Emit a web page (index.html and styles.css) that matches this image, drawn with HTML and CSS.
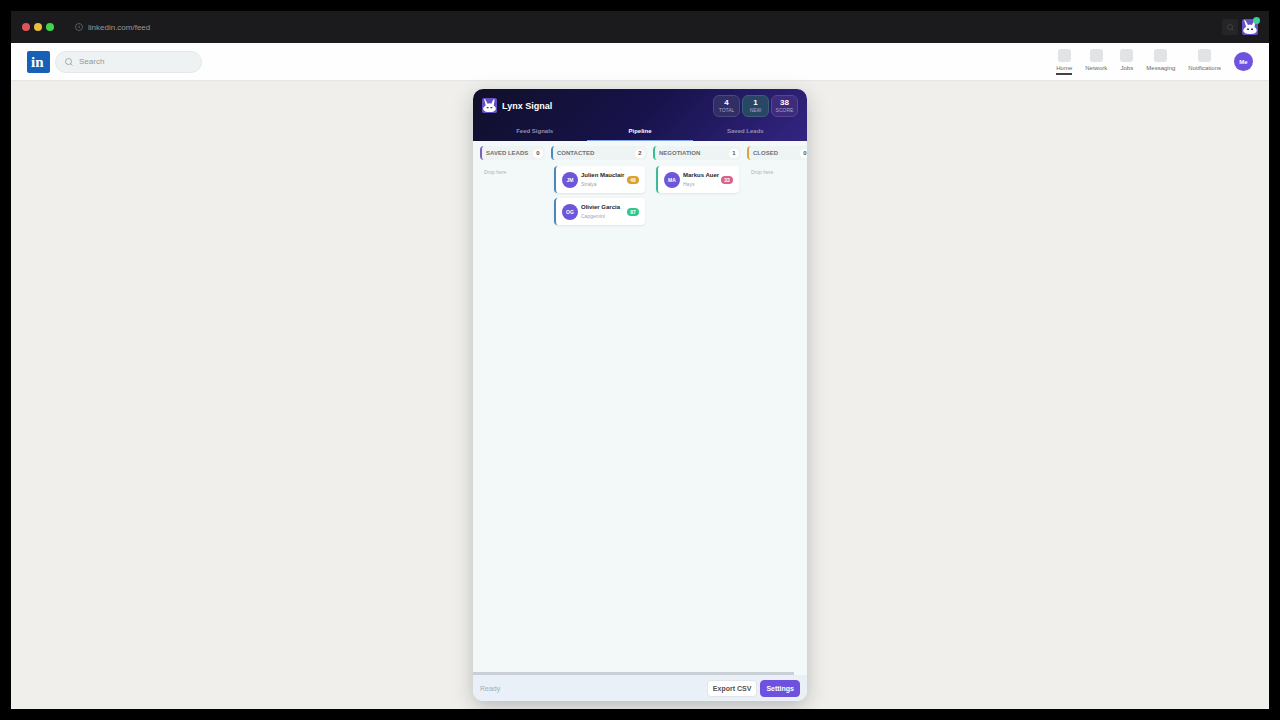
FILE: index.html
```html
<!DOCTYPE html>
<html lang="en">
<head>
    <meta charset="utf-8">
    <meta name="viewport" content="width=device-width, initial-scale=1.0">
    <title>Lynx Signal</title>
    <link rel="stylesheet" href="styles.css">
</head>

<body>
    <svg class="sprite" aria-hidden="true">
        <symbol id="lynx" viewBox="0 0 32 32">
            <rect width="32" height="32" rx="4" fill="#6451c4" />
            <path d="M4 2 L7 3 L12 12 Q16 10 20 12 L24 3 L27 3 L25 16 Q31 20 29 25 Q27 30 16 30 Q5 30 3 25 Q1 20 8 16 L6 8Z" fill="#fff" />
            <path d="M10 19h4v3h-4zM18 19h4v3h-4z" fill="#3b3470" />
        </symbol>
        <symbol id="search" viewBox="0 0 16 16">
            <circle cx="7" cy="7" r="6" fill="none" stroke="currentColor" stroke-width="1.6" />
            <path d="M11 11l4 4" stroke="currentColor" stroke-width="1.6" />
        </symbol>
    </svg>

    <div class="browser">
        <header class="topbar">
            <div class="lights"><span class="red"></span><span class="yellow"></span><span class="green"></span></div>
            <div class="address">
                <svg viewBox="0 0 16 16"><circle cx="8" cy="8" r="7" fill="none" stroke="currentColor" stroke-width="1.4" /><path d="M8 5v4h2" fill="none" stroke="currentColor" stroke-width="1.4" /></svg>
                <span>linkedin.com/feed</span>
            </div>
            <button class="find" aria-label="Find"><svg><use href="#search" /></svg></button>
            <button class="extension" aria-label="Lynx Signal"><svg><use href="#lynx" /></svg><span class="dot"></span></button>
        </header>

        <div class="site">
            <a class="logo" href="#" aria-label="LinkedIn">in</a>
            <label class="search"><svg><use href="#search" /></svg><input type="text" placeholder="Search" aria-label="Search"></label>
            <nav>
                <a href="#" class="active"><i></i>Home</a>
                <a href="#"><i></i>Network</a>
                <a href="#"><i></i>Jobs</a>
                <a href="#"><i></i>Messaging</a>
                <a href="#"><i></i>Notifications</a>
            </nav>
            <button class="me">Me</button>
        </div>

        <main>
            <section class="panel">
                <header class="head">
                    <div class="brand">
                        <svg><use href="#lynx" /></svg>
                        <h1>Lynx Signal</h1>
                        <div class="stats">
                            <div class="stat"><b>4</b><span>TOTAL</span></div>
                            <div class="stat new"><b>1</b><span>NEW</span></div>
                            <div class="stat score"><b>38</b><span>SCORE</span></div>
                        </div>
                    </div>
                    <div class="tabs">
                        <button>Feed Signals</button>
                        <button class="active">Pipeline</button>
                        <button>Saved Leads</button>
                    </div>
                </header>

                <div class="board">
                    <div class="column saved">
                        <h2>SAVED LEADS <span>0</span></h2>
                        <p class="empty">Drop here</p>
                    </div>
                    <div class="column contacted">
                        <h2>CONTACTED <span>2</span></h2>
                        <article class="lead">
                            <div class="avatar">JM</div>
                            <div class="who"><h3>Julien Mauclair</h3><p>Stralya</p></div>
                            <span class="badge medium">48</span>
                        </article>
                        <article class="lead">
                            <div class="avatar">OG</div>
                            <div class="who"><h3>Olivier Garcia</h3><p>Capgemini</p></div>
                            <span class="badge high">87</span>
                        </article>
                    </div>
                    <div class="column negotiation">
                        <h2>NEGOTIATION <span>1</span></h2>
                        <article class="lead">
                            <div class="avatar">MA</div>
                            <div class="who"><h3>Markus Auer</h3><p>Hays</p></div>
                            <span class="badge low">33</span>
                        </article>
                    </div>
                    <div class="column closed">
                        <h2>CLOSED <span>0</span></h2>
                        <p class="empty">Drop here</p>
                    </div>
                </div>
                <div class="scrollbar"><span></span></div>

                <footer>
                    <span class="status">Ready</span>
                    <button>Export CSV</button>
                    <button class="primary">Settings</button>
                </footer>
            </section>
        </main>
    </div>
</body>
</html>
```

FILE: styles.css
```css
* {
    box-sizing: border-box;
}

body {
    margin: 0;
    height: 100vh;
    padding: 11px;
    background: #000;
    font-family: "Liberation Sans", Arial, sans-serif;
}

h1, h2, h3, p {
    margin: 0;
}

button {
    font-family: inherit;
    border: 0;
    padding: 0;
    cursor: pointer;
}

a {
    text-decoration: none;
}

svg {
    display: block;
}

.sprite {
    position: absolute;
    width: 0;
    height: 0;
}

.browser {
    height: 100%;
    display: flex;
    flex-direction: column;
    background: #f0efec;
    overflow: hidden;
}

/* browser bar */
.topbar {
    height: 32px;
    flex: none;
    display: flex;
    align-items: center;
    padding: 0 11px;
    background: #1b1b1d;
}

.lights {
    display: flex;
    gap: 4px;
}

.lights span {
    width: 8px;
    height: 8px;
    border-radius: 50%;
}

.red {
    background: #e2525b;
}

.yellow {
    background: #e9bd3e;
}

.green {
    background: #3fd64d;
}

.address {
    display: flex;
    align-items: center;
    gap: 5px;
    margin-left: 21px;
    margin-right: auto;
    color: #97979b;
    font-size: 8px;
}

.address svg {
    width: 8px;
    height: 8px;
    color: #747478;
}

.find {
    width: 16px;
    height: 16px;
    display: grid;
    place-items: center;
    border-radius: 2px;
    background: #252527;
    color: #4b4b4e;
}

.find svg {
    width: 7px;
    height: 7px;
}

.extension {
    position: relative;
    margin-left: 4px;
    background: none;
}

.extension svg {
    width: 16px;
    height: 16px;
}

.dot {
    position: absolute;
    top: -2px;
    right: -2px;
    width: 7px;
    height: 7px;
    border-radius: 50%;
    background: #3fcf99;
}

/* site bar */
.site {
    height: 37px;
    flex: none;
    display: flex;
    align-items: center;
    padding: 0 16px;
    background: #fefefe;
    box-shadow: 0 1px 1px #e6e6e6;
}

.logo {
    width: 23px;
    height: 22px;
    border-radius: 2px;
    background: #1561b8;
    color: #fff;
    font: bold 15px/23px "Liberation Serif", serif;
    padding-left: 4px;
}

.search {
    width: 147px;
    height: 22px;
    display: flex;
    align-items: center;
    gap: 6px;
    margin-left: 5px;
    padding: 0 9px;
    border: 1px solid #e4e8ea;
    border-radius: 11px;
    background: #eef2f3;
    color: #92979b;
}

.search svg {
    width: 8px;
    height: 8px;
}

.search input {
    flex: 1;
    min-width: 0;
    padding: 0;
    border: 0;
    background: none;
    font: 8px "Liberation Sans", Arial, sans-serif;
}

.search input::placeholder {
    color: #92979b;
}

.site nav {
    display: flex;
    gap: 13px;
    margin-left: auto;
}

.site nav a {
    display: flex;
    flex-direction: column;
    align-items: center;
    gap: 2px;
    height: 26px;
    color: #68686b;
    font-size: 6px;
    line-height: 9px;
}

.site nav i {
    width: 13px;
    height: 13px;
    border-radius: 3px;
    background: #e1e3e4;
}

.site nav .active {
    border-bottom: 2px solid #444;
}

.me {
    width: 19px;
    height: 19px;
    margin-left: 13px;
    border-radius: 50%;
    background: #6f52de;
    color: #fff;
    font-size: 6px;
    font-weight: bold;
}

main {
    flex: 1;
    min-height: 0;
    display: flex;
    justify-content: center;
    padding: 9px 0 8px;
}

/* extension panel */
.panel {
    width: 334px;
    max-width: 100%;
    display: flex;
    flex-direction: column;
    overflow: hidden;
    border-radius: 10px;
    background: #f3f9f9;
    box-shadow: 0 6px 20px rgba(60, 70, 70, 0.3);
}

.head {
    background: linear-gradient(135deg, #101029 0%, #17124a 50%, #332583 100%);
    color: #fff;
}

.brand {
    display: flex;
    align-items: center;
    height: 33px;
    padding: 0 9px;
}

.brand > svg {
    width: 15px;
    height: 15px;
}

h1 {
    margin-left: 5px;
    font-size: 9px;
}

.stats {
    display: flex;
    gap: 2px;
    margin-left: auto;
}

.stat {
    width: 27px;
    height: 22px;
    padding-top: 2px;
    border: 1px solid #4c477c;
    border-radius: 6px;
    background: #312d65;
    text-align: center;
}

.stat b,
.stat span {
    display: block;
}

.stat b {
    font-size: 8px;
    line-height: 9px;
}

.stat span {
    color: #a9a5c8;
    font-size: 5px;
    line-height: 6px;
}

.stat.new {
    border-color: #3b6076;
    background: #284765;
}

.stat.score {
    border-color: #584493;
    background: #3d2b7b;
}

.tabs {
    display: grid;
    grid-template-columns: repeat(3, 1fr);
    padding: 0 9px;
}

.tabs button {
    height: 19px;
    border-bottom: 1px solid transparent;
    background: none;
    color: #928eb1;
    font-size: 6px;
    font-weight: bold;
}

.tabs .active {
    border-color: #81a3e8;
    color: #fff;
}

.board {
    flex: 1;
    min-height: 0;
    display: flex;
    align-items: flex-start;
    gap: 6px;
    padding: 5px 7px;
    overflow: hidden;
}

.column {
    --stage: #7562bb;
    flex: none;
}

.contacted {
    --stage: #4d86b8;
}

.negotiation {
    --stage: #3dba94;
}

.closed {
    --stage: #d9a43b;
}

.saved,
.closed {
    width: 65px;
}

.contacted {
    width: 96px;
}

.negotiation {
    width: 88px;
}

h2 {
    display: flex;
    align-items: center;
    justify-content: space-between;
    height: 14px;
    padding: 0 2px 0 4px;
    border-left: 2px solid var(--stage);
    border-radius: 4px;
    background: #eef4f4;
    color: #6b7378;
    font-size: 6px;
    white-space: nowrap;
}

h2 span {
    width: 10px;
    border-radius: 5px;
    background: #fff;
    color: #555;
    font-size: 6px;
    line-height: 9px;
    text-align: center;
}

.empty {
    padding: 9px 4px;
    color: #adb2b4;
    font-size: 5px;
    line-height: 6px;
}

.lead {
    display: flex;
    align-items: center;
    height: 27px;
    margin: 6px 2px 0 3px;
    padding: 0 6px;
    border-left: 2px solid var(--stage);
    border-radius: 4px;
    background: #fff;
    box-shadow: 0 1px 2px rgba(40, 60, 70, 0.1);
}

.lead + .lead {
    margin-top: 5px;
}

.avatar {
    width: 16px;
    height: 16px;
    flex: none;
    border-radius: 50%;
    background: #6f55d8;
    color: #fff;
    font-size: 5px;
    font-weight: bold;
    line-height: 16px;
    text-align: center;
}

.who {
    flex: 1;
    min-width: 0;
    margin-left: 3px;
}

h3 {
    color: #242528;
    font-size: 6px;
    line-height: 10px;
    white-space: nowrap;
}

.who p {
    color: #a2a5a8;
    font-size: 5px;
    line-height: 9px;
}

.badge {
    width: 12px;
    flex: none;
    border-radius: 4px;
    color: #fff;
    font-size: 5px;
    font-weight: bold;
    line-height: 8px;
    text-align: center;
}

.medium {
    background: #dda02e;
}

.high {
    background: #30c78e;
}

.low {
    background: #d96389;
}

.scrollbar {
    padding-right: 4%;
}

.scrollbar span {
    display: block;
    height: 3px;
    background: #cbcfd6;
}

footer {
    display: flex;
    align-items: center;
    gap: 3px;
    height: 26px;
    padding: 0 7px;
    background: #eaf0f7;
}

.status {
    margin-right: auto;
    color: #a6acb6;
    font-size: 7px;
}

footer button {
    height: 17px;
    padding: 0 5px;
    border: 1px solid #e1e4e8;
    border-radius: 4px;
    background: #fff;
    color: #505156;
    font-size: 7px;
    font-weight: bold;
}

footer .primary {
    border-color: #6f51df;
    background: #6f51df;
    color: #fff;
}
```
